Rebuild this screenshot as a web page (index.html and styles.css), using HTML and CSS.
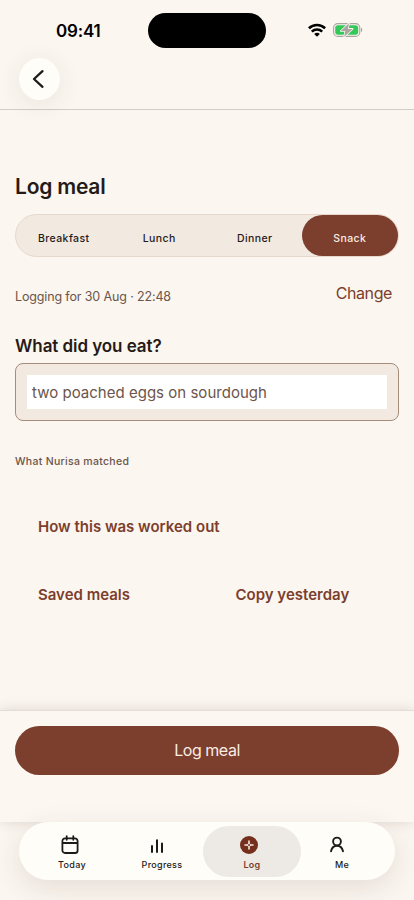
FILE: index.html
```html
<!DOCTYPE html>
<html lang="en">
<head>
<meta charset="utf-8">
<meta name="viewport" content="width=device-width, initial-scale=1">
<title>Log meal</title>
<link rel="stylesheet" href="styles.css">
</head>
<body>
<div class="app">
  <header class="top">
    <div class="status">
      <span class="time">09:41</span>
      <span class="island"></span>
      <span class="indicators">
        <svg class="wifi" width="18" height="14" viewBox="0 0 18 14"><g fill="none" stroke="#000" stroke-width="2.6"><path d="M.9 5.3C5.5.9 12.5.9 17.1 5.3"/><path d="M3.8 8.600C6.8 5.800 11.2 5.800 14.2 8.600"/></g><path d="M6.2 10.900C7.8 9.400 10.2 9.400 11.8 10.900L9 13.700Z"/></svg>
        <svg class="battery" width="30" height="14" viewBox="0 0 30 14"><rect x=".6" y=".6" width="26.2" height="12.8" rx="4.2" fill="none" stroke="#aaa5a0" stroke-width="1.1"/><rect x="2.2" y="2.2" width="23" height="9.6" rx="2.8" fill="#34c759"/><path d="M28 4.8v4.4c1.7-.6 1.7-3.8 0-4.4Z" fill="#aaa5a0"/><path d="M16 .2 7.800 8h4.500L11.2 13.800 19.600 5.900h-4.700Z" fill="#aaa5a0" stroke="#fbf6f0" stroke-width="1.600" paint-order="stroke" stroke-linejoin="round"/></svg>
      </span>
    </div>
    <button class="back" aria-label="Back"><svg width="14" height="20" viewBox="0 0 14 20"><path d="M11.500 2.200 3 10l8.500 7.800" fill="none" stroke="#1d1b19" stroke-width="2.3" stroke-linecap="round" stroke-linejoin="round"/></svg></button>
  </header>
  <main class="content">
    <h1 class="title">Log meal</h1>
    <div class="segments">
      <span class="segment">Breakfast</span>
      <span class="segment">Lunch</span>
      <span class="segment">Dinner</span>
      <span class="segment segment-on">Snack</span>
    </div>
    <div class="when"><span class="when-text">Logging for 30 Aug · 22:48</span><span class="change">Change</span></div>
    <h2 class="question">What did you eat?</h2>
    <div class="field"><div class="field-value">two poached eggs on sourdough</div></div>
    <p class="matched">What Nurisa matched</p>
    <p class="link worked">How this was worked out</p>
    <div class="shortcuts"><span class="link saved">Saved meals</span><span class="link copy">Copy yesterday</span></div>
  </main>
  <footer class="action"><button class="submit">Log meal</button></footer>
  <div class="dock">
    <nav class="tabs">
      <span class="tab"><svg class="tab-icon tab-calendar" width="20" height="20" viewBox="0 0 20 20"><path d="M5 3.4h10a2.600 2.600 0 0 1 2.600 2.600v9.400a2.600 2.600 0 0 1-2.600 2.600H5a2.600 2.600 0 0 1-2.600-2.600V6A2.600 2.600 0 0 1 5 3.400ZM2.400 8h15.200M6.700 1.200v3.600M13.300 1.200v3.600" fill="none" stroke="#1d1b19" stroke-width="1.8" stroke-linecap="round"/></svg><span class="tab-label">Today</span></span>
      <span class="tab"><svg class="tab-icon tab-bars" width="20" height="20" viewBox="0 0 20 20"><path d="M5 11v6M10 5.200v11.800M15 8.500v8.500" fill="none" stroke="#1d1b19" stroke-width="2" stroke-linecap="round"/></svg><span class="tab-label">Progress</span></span>
      <span class="tab tab-on"><svg class="tab-icon tab-plus" width="20" height="20" viewBox="0 0 20 20"><circle cx="10" cy="10" r="9" fill="#752f1d"/><path d="M6 10h2.200M11.800 10H14M10 6v2.200M10 11.800V14" stroke="#f5e9e2" stroke-width="1.6" stroke-linecap="round"/><circle cx="10" cy="10" r="1.500" fill="none" stroke="#f5e9e2" stroke-width=".8"/></svg><span class="tab-label">Log</span></span>
      <span class="tab"><svg class="tab-icon tab-person" width="20" height="20" viewBox="0 0 20 20"><circle cx="10" cy="6.500" r="3.900" fill="none" stroke="#1d1b19" stroke-width="1.9"/><path d="M4 16.200c.800-3.600 3-5.500 6-5.500s5.200 1.900 6 5.500" fill="none" stroke="#1d1b19" stroke-width="1.9" stroke-linecap="round"/></svg><span class="tab-label">Me</span></span>
    </nav>
  </div>
</div>
</body>
</html>
```
FILE: styles.css
```css
* { box-sizing: border-box; margin: 0; padding: 0; }
body { background: #fbf6f0; color: #261a17; font-family: Inter, "Liberation Sans", sans-serif; }
button { border: 0; font: inherit; }
svg { display: block; }
.app { width: 414px; height: 900px; display: flex; flex-direction: column; overflow: hidden; }
.top { height: 110px; flex: none; border-bottom: 1px solid #d2cdc8; }
.status { height: 58px; padding: 13px 51px 0 56px; display: grid; grid-template-columns: 92px 118px 1fr; }
.time { font-size: 17px; line-height: 36px; font-weight: 600; color: #000; letter-spacing: -.2px; }
.island { height: 35px; border-radius: 18px; background: #000; }
.indicators { display: flex; padding: 10px 0 0 42px; gap: 7px; }
.wifi, .battery { flex: none; }
.back { width: 41px; height: 42px; margin-left: 19px; border-radius: 50%; background: #fffdf8; display: flex; align-items: center; padding-left: 12px; box-shadow: 0 4px 24px rgba(70, 50, 30, .09); }
.content { flex: 1; padding: 64px 15px 0; }
.title { font-size: 21px; line-height: 26px; font-weight: 600; letter-spacing: -.22px; }
.segments { height: 43px; margin-top: 14px; display: grid; grid-template-columns: repeat(4, 1fr); border: 1px solid #e7d8cc; border-radius: 22px; background: #f2e9e1; }
.segment { display: flex; align-items: center; justify-content: center; font-size: 10.500px; font-weight: 500; letter-spacing: .4px; padding-top: 5px; }
.segment-on { background: #7c3e2d; color: #f9ece5; border-radius: 21px; margin-left: -1px; }
.when { display: flex; justify-content: space-between; margin-top: 26px; height: 26px; padding-right: 7px; }
.when-text { font-size: 12.500px; line-height: 27px; letter-spacing: -.14px; color: #6c554a; }
.change { font-size: 16px; line-height: 20px; letter-spacing: -.4px; color: #7c3e2d; }
.question { font-size: 17px; line-height: 22px; margin-top: 26px; font-weight: 600; letter-spacing: -.06px; }
.field { height: 58px; margin-top: 6px; padding: 11px; border: 1px solid #a78c7c; border-radius: 8px; background: #f2e9e1; }
.field-value { height: 34px; background: #fff; padding-left: 5px; line-height: 35px; font-size: 15px; letter-spacing: .02px; color: #6c554a; }
.matched { font-size: 10.500px; line-height: 16px; font-weight: 500; letter-spacing: .3px; color: #6c554a; margin-top: 33px; }
.link { font-size: 15px; line-height: 20px; font-weight: 600; color: #7c3e2d; }
.worked { margin: 47px 0 0 23px; }
.shortcuts { display: grid; grid-template-columns: 197.500px 1fr; margin: 48px 0 0 23px; }
.action { height: 112px; flex: none; padding: 15px 15px 0; border-top: 1px solid #e3ddd7; box-shadow: 0 0 12px rgba(70, 50, 30, .16); background: #fcf7f1; }
.submit { width: 384px; height: 49px; display: block; border-radius: 25px; background: #7c3e2d; color: #f9ece5; font-size: 16px; letter-spacing: -.45px; padding-bottom: 2px; }
.dock { height: 78px; flex: none; padding: 0 19px; position: relative; }
.tabs { height: 58px; border-radius: 29px; background: #fffdf8; display: grid; grid-template-columns: repeat(4, 90px); padding: 4px 8px 3px; box-shadow: 0 8px 28px rgba(70, 50, 30, .12); }
.tab { display: flex; flex-direction: column; align-items: center; padding-top: 9px; color: #1d1b19; }
.tab-icon { flex: none; }
.tab-calendar { margin-right: 5px; }
.tab-bars { margin-right: 11px; }
.tab-plus { margin-right: 6px; }
.tab-person { margin-right: 10px; }
.tab-label { font-size: 9px; line-height: 12px; margin-top: 4px; font-weight: 500; letter-spacing: .3px; }
.tab-on { margin: 0 -4px; border-radius: 26px; background: #edeae6; color: #7c3e2d; }
.tab-on .tab-label { font-weight: 600; }
```
